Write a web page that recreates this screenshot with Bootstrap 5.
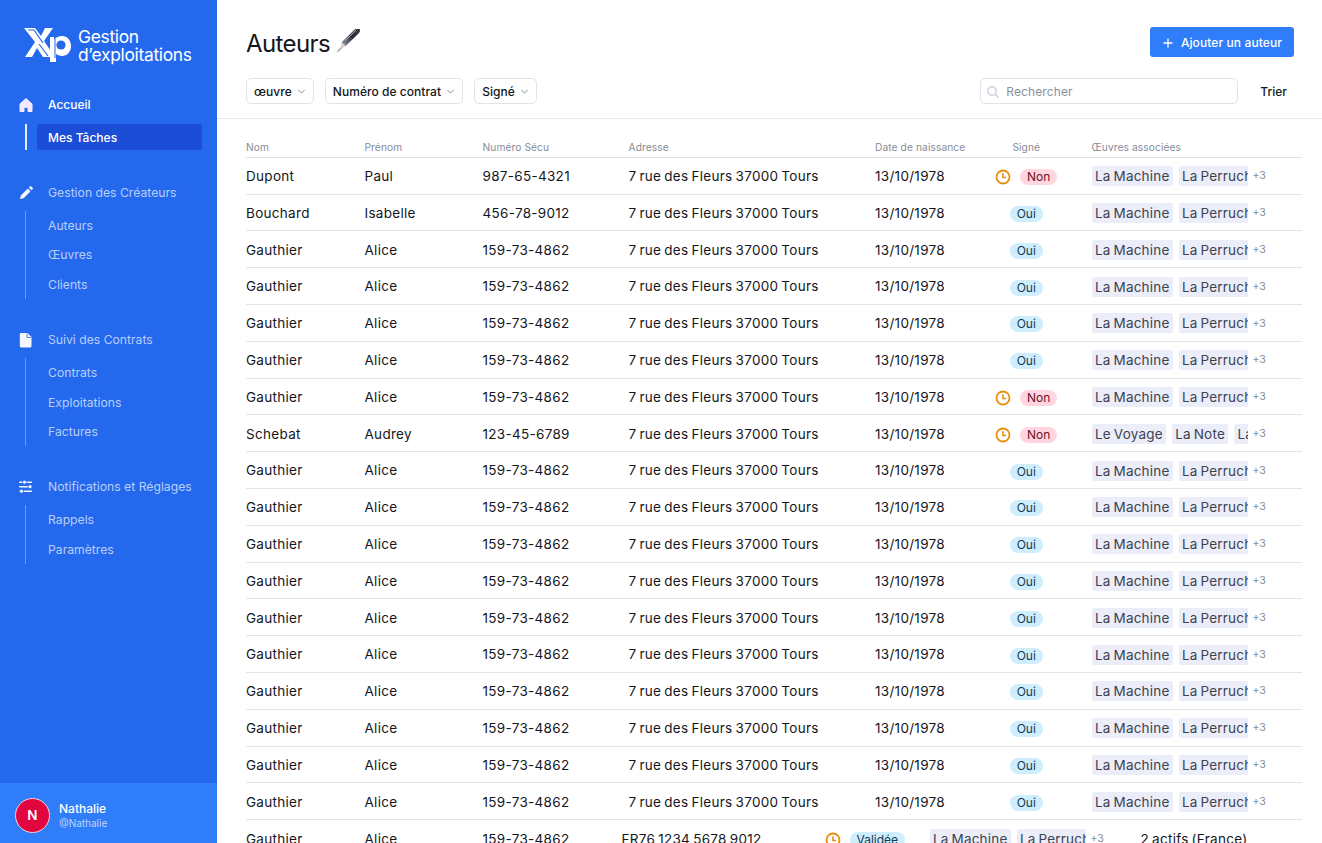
<!DOCTYPE html>
<html lang="fr">
<head>
  <meta charset="UTF-8">
  <meta name="viewport" content="width=device-width, initial-scale=1.0">
  <title>Auteurs</title>
  <link href="https://cdn.jsdelivr.net/npm/bootstrap@5.3.0/dist/css/bootstrap.min.css" rel="stylesheet">
  <style>
    html, body { height: 100%; }
    body { font-family: Inter, "Liberation Sans", sans-serif; color: #14161c; overflow: hidden; }
    .app-shell { height: 843px; }

    .side { width: 217px; background: #2468ee; color: #fff; }
    .brand { padding: 26px 0 0 24px; height: 97px; }
    .brand-name { font-size: 17.4px; line-height: 17.5px; letter-spacing: -.3px; margin-left: 7px; margin-top: 2px; }
    .side-nav { padding: 0 15px 0 17px; }
    .side-group { margin-bottom: 33px; }
    .side-head { height: 16px; font-size: 12.2px; line-height: 16px; color: #b9cffb; }
    .side-head.on { color: #fff; font-size: 12px; font-weight: 500; }
    .side-head svg { width: 18px; height: 18px; margin-right: 13px; flex: none; }
    .side-sub { margin: 10px 0 0 8px; border-left: 1px solid #6b9af5; padding-left: 11px; }
    .side-sub a { display: block; height: 29.4px; line-height: 29.4px; font-size: 12.2px; color: #b9cffb; text-decoration: none; padding-left: 11px; }
    .side-sub.on { border-left: 2px solid #e6eefe; margin: 11px 0 35px 8px; padding-left: 10px; }
    .side-sub.on a { height: 26px; line-height: 27px; font-size: 12px; font-weight: 500; background: #1b4dd6; color: #fff; border-radius: 3px; }
    .side-foot { background: #2f7df8; height: 60px; padding: 5px 0 0 15px; gap: 9px; }
    .avatar { width: 35px; height: 35px; background: #e2053f; border: 1px solid #f4d3dc; font-size: 13.5px; font-weight: 600; }
    .foot-name { font-size: 12px; line-height: 15px; font-weight: 500; margin-top: 1px; }
    .foot-handle { font-size: 10px; line-height: 15px; color: #bcd3fc; }

    .page-top { height: 119px; padding: 27px 28px 0 29px; border-bottom: 1px solid #e9eaee; }
    .page-title { font-size: 24px; line-height: 34px; letter-spacing: -.6px; font-weight: 400; }
    .add-btn { height: 30px; padding: 1px 12px 0; gap: 7px; background: #2f7df8; border: 0; border-radius: 3px; color: #fff; font-size: 12px; font-weight: 500; letter-spacing: .1px; }
    .add-btn:hover { background: #2f7df8; color: #fff; }
    .filter-row { margin-top: 17px; }
    .filter-list { gap: 11px; }
    .filter-btn { height: 26px; padding: 1px 7px 0; background: #fff; border: 1px solid #e1e3ea; border-radius: 5px; font-size: 12px; font-weight: 500; color: #14161c; letter-spacing: .05px; gap: 5px; }
    .filter-btn svg { width: 9px; height: 9px; }
    .search-box { width: 258px; height: 26px; border: 1px solid #e1e3ea; border-radius: 5px; padding: 1px 0 0 5px; font-size: 12px; color: #8b909b; letter-spacing: .1px; gap: 6px; margin-right: 22px; }
    .sort-lnk { font-size: 12px; font-weight: 500; margin-right: 7px; padding-top: 1px; }

    .data-wrap { padding: 18.3px 21px 0 29px; }
    .data-grid { table-layout: fixed; width: 1056px; margin: 0; border-collapse: collapse; }
    .data-grid th { height: 20px; padding: 2px 0 3px; font-size: 10.2px; line-height: 14px; font-weight: 400; color: #868c98; letter-spacing: .1px; border-bottom: 1px solid #dfe1e8; vertical-align: middle; white-space: nowrap; }
    .data-grid td { height: 36.8px; padding: 1px 0 0; font-size: 13.5px; color: #14161c; border-bottom: 1px solid #e3e4eb; vertical-align: middle; white-space: nowrap; letter-spacing: .3px; word-spacing: -1.1px; }
    .data-grid td.status-cell { padding: 3px 0 0; }
    .data-grid tr.end-row td { border-bottom: 0; }
    .pill { display: block; height: 16px; line-height: 16px; border-radius: 8px; font-size: 12px; padding: 0 7px; letter-spacing: 0; word-spacing: 0; }
    .pill-yes { background: #cfeefd; color: #123a52; }
    .pill-no { background: #ffd6e0; color: #6d0f28; margin-left: 9px; }
    .clock-ico { width: 16px; height: 16px; flex: none; }
    .works { width: 156px; overflow: hidden; gap: 5.5px; }
    .work-tag { flex: none; height: 20px; line-height: 20px; padding: 0 3.5px; background: #ebeef8; border-radius: 2px; color: #3d4250; letter-spacing: .2px; }
    .more-count { font-size: 10.5px; color: #868c98; margin-left: 5px; letter-spacing: 0; }
    .end-row .pill-yes { margin-left: 9px; }
  </style>
</head>
<body>
  <div class="app-shell d-flex">
    <aside class="side d-flex flex-column flex-shrink-0">
      <div class="brand d-flex align-items-start">
        <svg width="47" height="36" viewBox="0 0 47 36">
          <path d="M0 2h11l6 8 4-8h8l-9 13 11 16H19l-6-9-5 9H1l10-15z" fill="#fff"/>
          <path d="M4 4h6l9 13M15 18l9 12" fill="none" stroke="#2468ee" stroke-width="1.2"/>
          <path d="M26 11h4v3c2-3 5-4 8-4 5 0 9 4 9 10s-4 10-9 10c-2 0-4-1-6-2v8h-6z" fill="#fff"/>
          <circle cx="37" cy="19" r="4.6" fill="#2468ee"/>
          <path d="M31 13v19" stroke="#2468ee" stroke-width="1"/>
        </svg>
        <div class="brand-name">Gestion<br>d’exploitations</div>
      </div>
      <nav class="side-nav flex-grow-1">
        <div class="side-group">
          <div class="side-head on d-flex align-items-center">
            <svg viewBox="0 0 18 18"><path d="M9 2.500 3 8v7.500h4v-4.200h4v4.200h4V8z" fill="#f1e9ff" stroke="#f1e9ff" stroke-linejoin="round"/></svg>Accueil
          </div>
          <div class="side-sub on"><a href="#">Mes Tâches</a></div>
        </div>
        <div class="side-group">
          <div class="side-head d-flex align-items-center">
            <svg viewBox="0 0 18 18"><path d="M3 15l.8-3.600 7-7 2.800 2.800-7 7zM11.800 3.400l1-1a1 1 0 0 1 1.400 0l1.400 1.400a1 1 0 0 1 0 1.400l-1 1z" fill="#f4f7ff"/></svg>Gestion des Créateurs
          </div>
          <div class="side-sub"><a href="#">Auteurs</a><a href="#">Œuvres</a><a href="#">Clients</a></div>
        </div>
        <div class="side-group">
          <div class="side-head d-flex align-items-center">
            <svg viewBox="0 0 18 18"><path d="M4 2h6.500L14.500 6v9a1.500 1.500 0 0 1-1.500 1.500H4A1.500 1.500 0 0 1 2.800 15V3.200A1.200 1.200 0 0 1 4 2z" fill="#f4f7ff"/><path d="M10 2.500V6.500h4" fill="none" stroke="#2468ee" stroke-width=".8"/></svg>Suivi des Contrats
          </div>
          <div class="side-sub"><a href="#">Contrats</a><a href="#">Exploitations</a><a href="#">Factures</a></div>
        </div>
        <div class="side-group">
          <div class="side-head d-flex align-items-center">
            <svg viewBox="0 0 18 18" fill="#f4f7ff"><rect x="2" y="3.500" width="13" height="1.500" rx=".7"/><rect x="2" y="8" width="13" height="1.500" rx=".7"/><rect x="2" y="12.500" width="13" height="1.500" rx=".7"/><g stroke="#2468ee" stroke-width=".8"><circle cx="7.500" cy="4.200" r="2"/><circle cx="13" cy="8.700" r="2"/><circle cx="4.500" cy="13.200" r="2"/></g></svg>Notifications et Réglages
          </div>
          <div class="side-sub"><a href="#">Rappels</a><a href="#">Paramètres</a></div>
        </div>
      </nav>
      <div class="side-foot d-flex align-items-center">
        <div class="avatar rounded-circle d-flex align-items-center justify-content-center">N</div>
        <div>
          <div class="foot-name">Nathalie</div>
          <div class="foot-handle">@Nathalie</div>
        </div>
      </div>
    </aside>

    <main class="flex-grow-1 overflow-hidden">
      <div class="page-top">
        <div class="d-flex justify-content-between align-items-start">
          <h1 class="page-title d-flex align-items-center m-0">Auteurs
            <svg width="31" height="31" viewBox="-1.500 3 28 28">
              <defs><linearGradient id="penBody" x1="1" y1="0" x2="0" y2="1"><stop offset="0" stop-color="#3a3f47"/><stop offset=".45" stop-color="#2a2d33"/><stop offset=".8" stop-color="#6f7884"/><stop offset="1" stop-color="#a9b1bb"/></linearGradient></defs>
              <path d="M9 15 21.500 2.800c1.500-1 3.500-.5 4 .8.400 1.200 0 2.300-1 3.200L12.500 18.500z" fill="url(#penBody)"/>
              <path d="M12 13.500 22 4" stroke="#c4ccd6" stroke-width=".8"/>
              <path d="M9 15l3.500 3.500-2.500 1.500-3 3-2.500 1 1-2.500 3-3z" fill="#d3d0c8"/>
              <path d="M5 24l4-4" stroke="#8a867c" stroke-width=".6"/>
            </svg>
          </h1>
          <button class="add-btn btn d-flex align-items-center" type="button">
            <svg width="12" height="12" viewBox="0 0 12 12"><path d="M6 1.500v9M1.500 6h9" stroke="#fff" stroke-width="1.300"/></svg>Ajouter un auteur
          </button>
        </div>
        <div class="filter-row d-flex align-items-center">
          <div class="filter-list d-flex flex-grow-1" id="filtres"></div>
          <div class="search-box d-flex align-items-center">
            <svg width="14" height="14" viewBox="0 0 14 14"><circle cx="6" cy="6" r="4.200" fill="none" stroke="#cdd0d8" stroke-width="1.400"/><path d="M9.200 9.200l3.300 3.300" stroke="#cdd0d8" stroke-width="1.600"/></svg>Rechercher
          </div>
          <div class="sort-lnk">Trier</div>
        </div>
      </div>

      <div class="data-wrap">
        <table class="data-grid">
          <colgroup><col style="width:118.500px"><col style="width:118px"><col style="width:146px"><col style="width:246.500px"><col style="width:86px"><col style="width:130.500px"><col></colgroup>
          <thead>
            <tr><th>Nom</th><th>Prénom</th><th>Numéro Sécu</th><th>Adresse</th><th>Date de naissance</th><th class="text-center">Signé</th><th>Œuvres associées</th></tr>
          </thead>
          <tbody id="lignes"></tbody>
        </table>
        <table class="data-grid">
          <colgroup><col style="width:118.500px"><col style="width:118px"><col style="width:139px"><col style="width:203px"><col style="width:105px"><col style="width:211px"><col></colgroup>
          <tbody>
            <tr class="end-row">
              <td>Gauthier</td><td>Alice</td><td>159-73-4862</td><td>FR76 1234 5678 9012</td>
              <td class="status-cell"><div class="d-flex align-items-center"><svg class="clock-ico" viewBox="0 0 16 16"><circle cx="8" cy="8" r="6.500" fill="none" stroke="#e8900c" stroke-width="1.800"/><path d="M8 4.200V8.500h3.200" fill="none" stroke="#e8900c" stroke-width="1.600"/></svg><span class="pill pill-yes">Validée</span></div></td>
              <td><div class="d-flex align-items-center"><div class="works d-flex"><span class="work-tag">La Machine</span><span class="work-tag">La Perruche</span></div><span class="more-count">+3</span></div></td>
              <td>2 actifs (France)</td>
            </tr>
          </tbody>
        </table>
      </div>
    </main>
  </div>

  <script>
    const chevron = '<svg viewBox="0 0 10 10"><path d="M1.500 3.200 5 6.800l3.500-3.600" fill="none" stroke="#7d828e" stroke-width="1"/></svg>';
    document.getElementById('filtres').innerHTML = ['œuvre', 'Numéro de contrat', 'Signé']
      .map(f => `<button type="button" class="filter-btn d-flex align-items-center">${f}${chevron}</button>`).join('');

    const clock = '<svg class="clock-ico" viewBox="0 0 16 16"><circle cx="8" cy="8" r="6.500" fill="none" stroke="#e8900c" stroke-width="1.800"/><path d="M8 4.200V8.500h3.200" fill="none" stroke="#e8900c" stroke-width="1.600"/></svg>';
    const gauthier = ['Gauthier', 'Alice', '159-73-4862', true];
    const auteurs = [
      ['Dupont', 'Paul', '987-65-4321', false],
      ['Bouchard', 'Isabelle', '456-78-9012', true],
      gauthier, gauthier, gauthier, gauthier,
      ['Gauthier', 'Alice', '159-73-4862', false],
      ['Schebat', 'Audrey', '123-45-6789', false, ['Le Voyage', 'La Note', 'La Peste']],
      gauthier, gauthier, gauthier, gauthier, gauthier, gauthier, gauthier, gauthier, gauthier, gauthier
    ];

    document.getElementById('lignes').innerHTML = auteurs.map(([nom, prenom, secu, signe, oeuvres]) => {
      const tags = (oeuvres || ['La Machine', 'La Perruche']).map(o => `<span class="work-tag">${o}</span>`).join('');
      const statut = signe ? '<span class="pill pill-yes">Oui</span>' : `${clock}<span class="pill pill-no">Non</span>`;
      return `<tr><td>${nom}</td><td>${prenom}</td><td>${secu}</td><td>7 rue des Fleurs 37000 Tours</td><td>13/10/1978</td>
        <td class="status-cell"><div class="d-flex justify-content-center align-items-center">${statut}</div></td>
        <td><div class="d-flex align-items-center"><div class="works d-flex">${tags}</div><span class="more-count">+3</span></div></td></tr>`;
    }).join('');
  </script>
  <script src="https://cdn.jsdelivr.net/npm/bootstrap@5.3.0/dist/js/bootstrap.bundle.min.js"></script>
</body>
</html>
